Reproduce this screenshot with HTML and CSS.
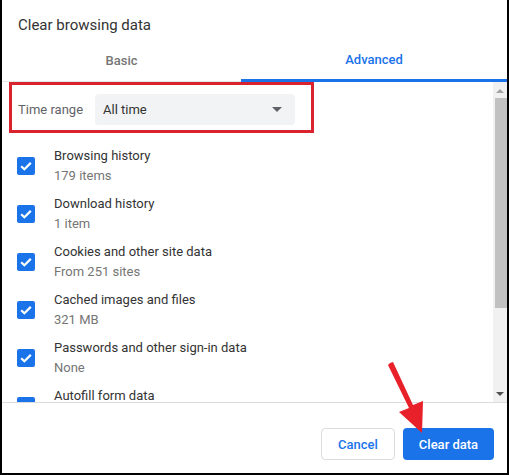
FILE: index.html
```html
<!DOCTYPE html>
<html>
<head>
<meta charset="utf-8">
<link rel="stylesheet" href="styles.css">
</head>
<body>
<div class="dialog">
  <div class="title">Clear browsing data</div>
  <div class="tabs">
    <div class="tab tab-basic">Basic</div>
    <div class="tab tab-advanced">Advanced</div>
  </div>
  <div class="content">
    <div class="list">
      <div class="range-box">
        <span class="range-label">Time range</span>
        <div class="select">
          <span>All time</span>
          <span class="caret"></span>
        </div>
      </div>
      <div class="rows">
        <div class="row"><span class="check"><svg viewBox="0 0 18 18" width="18" height="18"><path d="M4.2 9.2l3.2 3.1 6.4-6.4" fill="none" stroke="#fff" stroke-width="2.2"/></svg></span><div class="texts"><div class="primary">Browsing history</div><div class="secondary">179 items</div></div></div>
        <div class="row"><span class="check"><svg viewBox="0 0 18 18" width="18" height="18"><path d="M4.2 9.2l3.2 3.1 6.4-6.4" fill="none" stroke="#fff" stroke-width="2.2"/></svg></span><div class="texts"><div class="primary">Download history</div><div class="secondary">1 item</div></div></div>
        <div class="row"><span class="check"><svg viewBox="0 0 18 18" width="18" height="18"><path d="M4.2 9.2l3.2 3.1 6.4-6.4" fill="none" stroke="#fff" stroke-width="2.2"/></svg></span><div class="texts"><div class="primary">Cookies and other site data</div><div class="secondary">From 251 sites</div></div></div>
        <div class="row"><span class="check"><svg viewBox="0 0 18 18" width="18" height="18"><path d="M4.2 9.2l3.2 3.1 6.4-6.4" fill="none" stroke="#fff" stroke-width="2.2"/></svg></span><div class="texts"><div class="primary">Cached images and files</div><div class="secondary">321 MB</div></div></div>
        <div class="row"><span class="check"><svg viewBox="0 0 18 18" width="18" height="18"><path d="M4.2 9.2l3.2 3.1 6.4-6.4" fill="none" stroke="#fff" stroke-width="2.2"/></svg></span><div class="texts"><div class="primary">Passwords and other sign-in data</div><div class="secondary">None</div></div></div>
        <div class="row"><span class="check"><svg viewBox="0 0 18 18" width="18" height="18"><path d="M4.2 9.2l3.2 3.1 6.4-6.4" fill="none" stroke="#fff" stroke-width="2.2"/></svg></span><div class="texts"><div class="primary">Autofill form data</div><div class="secondary">None</div></div></div>
      </div>
    </div>
    <div class="scrollbar">
      <span class="arrow-up"></span>
      <div class="thumb"></div>
      <div class="track-rest"></div>
      <span class="arrow-down"></span>
    </div>
  </div>
  <div class="footer">
    <button class="btn btn-cancel">Cancel</button>
    <button class="btn btn-primary">Clear data</button>
  </div>
  <svg class="pointer" width="60" height="80" viewBox="0 0 60 80">
    <polygon points="4,1 7,0 27,43 37,39 36,71 13,50 23,46 2,3" fill="#e8202a"/>
  </svg>
</div>
</body>
</html>
```

FILE: styles.css
```css
* { box-sizing: border-box; }
html, body { margin: 0; padding: 0; background: #fff; }
body { font-family: Roboto, "Liberation Sans", Arial, sans-serif; }

.dialog {
  position: relative;
  width: 509px;
  height: 475px;
  border-left: 2px solid #000;
  border-right: 2px solid #000;
  border-bottom: 2px solid #000;
  display: flex;
  flex-direction: column;
  overflow: hidden;
}

.title {
  height: 40px;
  padding: 16px 0 0 16px;
  font-size: 15px;
  line-height: 18px;
  color: #333;
}

.tabs {
  display: flex;
  height: 42px;
}
.tab {
  display: flex;
  align-items: center;
  justify-content: center;
  font-size: 13px;
  font-weight: 500;
  padding-bottom: 1px;
}
.tab-basic {
  flex: 0 0 239px;
  color: #757575;
  border-bottom: 1px solid #e6e6e6;
}
.tab-advanced {
  flex: 1;
  color: #1a73e8;
  border-bottom: 3px solid #1a73e8;
}

.content {
  display: flex;
  height: 321px;
  border-bottom: 1px solid #dadce0;
}
.list {
  flex: 1;
  overflow: hidden;
}

.range-box {
  margin-left: 7px;
  width: 305px;
  height: 51px;
  border: 3px solid #d9232e;
  display: flex;
  align-items: center;
  padding: 4px 0 0 6px;
}
.range-label {
  font-size: 13px;
  color: #5f6368;
  width: 77px;
}
.select {
  width: 200px;
  height: 31px;
  background: #f1f3f4;
  border-radius: 4px;
  display: flex;
  align-items: center;
  justify-content: space-between;
  padding: 0 8px 0 8px;
  font-size: 13px;
  color: #333;
}
.caret {
  width: 0;
  height: 0;
  border-left: 5px solid transparent;
  border-right: 5px solid transparent;
  border-top: 5px solid #5f6368;
  margin-right: 5px;
}

.rows {
  display: flex;
  flex-direction: column;
  gap: 8px;
  padding-top: 13px;
}
.row {
  display: flex;
  align-items: center;
  height: 40px;
  padding-left: 15px;
  flex-shrink: 0;
}
.check {
  width: 18px;
  height: 18px;
  border-radius: 2px;
  background: #1a73e8;
  margin-right: 19px;
  display: flex;
}
.texts { font-size: 13px; line-height: 20px; }
.primary { color: #333; }
.secondary { color: #757575; }

.scrollbar {
  width: 14px;
  background: #f1f1f1;
  display: flex;
  flex-direction: column;
  align-items: center;
}
.arrow-up {
  margin-top: 7px;
  width: 0; height: 0;
  border-left: 4px solid transparent;
  border-right: 4px solid transparent;
  border-bottom: 4px solid #a3a3a3;
  margin-bottom: 5px;
}
.thumb {
  width: 12px;
  margin-left: 2px;
  height: 210px;
  background: #c1c1c1;
}
.track-rest { flex: 1; }
.arrow-down {
  width: 0; height: 0;
  border-left: 4px solid transparent;
  border-right: 4px solid transparent;
  border-top: 4px solid #505050;
  margin-bottom: 6px;
}

.footer {
  flex: 1;
  display: flex;
  justify-content: flex-end;
  align-items: flex-start;
  gap: 8px;
  padding: 25px 13px 0 0;
}
.btn {
  height: 32px;
  border-radius: 4px;
  font-family: Roboto, "Liberation Sans", Arial, sans-serif;
  font-size: 13px;
  font-weight: 500;
  padding: 0;
  cursor: pointer;
}
.btn-cancel {
  width: 74px;
  background: #fff;
  color: #1a73e8;
  border: 1px solid #dadce0;
}
.btn-primary {
  width: 91px;
  background: #1a73e8;
  color: #fff;
  border: none;
}

.pointer {
  position: absolute;
  left: 384px;
  top: 362px;
}
```
